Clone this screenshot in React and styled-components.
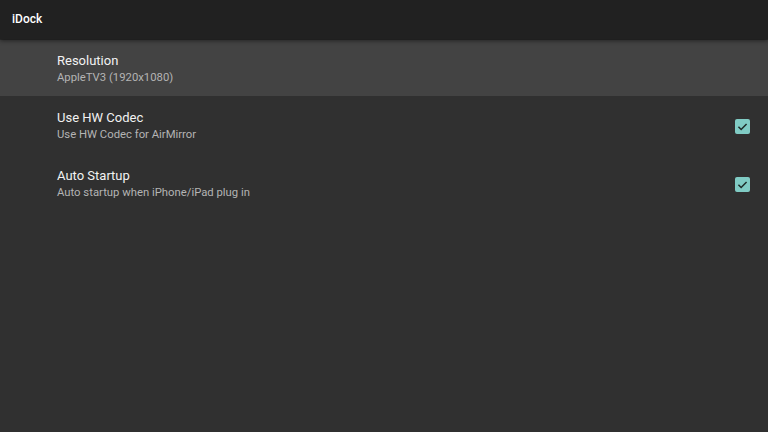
import styled, { createGlobalStyle } from "styled-components";

const Global = createGlobalStyle`
  html, body {
    margin: 0;
    background: #303030;
    font-family: Roboto, "Noto Sans", sans-serif;
  }
`;

const Page = styled.div`
  width: 768px;
  height: 432px;
  background: #303030;
  display: flex;
  flex-direction: column;
  overflow: hidden;
`;

const Toolbar = styled.header`
  height: 39px;
  background: #212121;
  display: flex;
  align-items: center;
  padding: 0 12px;
  box-shadow: 0 2px 4px rgba(0, 0, 0, 0.45);
  position: relative;
  z-index: 1;
`;

const AppTitle = styled.div`
  color: #ffffff;
  font-size: 12px;
  font-weight: 500;
  margin-top: -1px;
`;

const List = styled.div`
  display: flex;
  flex-direction: column;
  padding-top: 1px;
`;

const Row = styled.div`
  height: ${(p) => (p.$first ? 56 : 58)}px;
  background: ${(p) => (p.$focused ? "#434343" : "transparent")};
  display: flex;
  align-items: center;
  padding: 2px 18px 0 57px;
  box-sizing: border-box;
`;

const Texts = styled.div`
  flex: 1;
  display: flex;
  flex-direction: column;
  gap: 2px;
`;

const Title = styled.div`
  color: #f2f2f2;
  font-size: 13px;
  line-height: 16px;
`;

const Summary = styled.div`
  color: #b4b4b4;
  font-size: 11.3px;
  line-height: 14px;
`;

const Check = styled.div`
  width: 15px;
  height: 15px;
  border-radius: 2px;
  background: #80cbc4;
  display: flex;
  align-items: center;
  justify-content: center;
`;

function CheckBox() {
  return (
    <Check>
      <svg width="13" height="13" viewBox="0 0 24 24">
        <path d="M4.5 12.5l5 5 10-10" fill="none" stroke="#1e2a28" strokeWidth="2.8" />
      </svg>
    </Check>
  );
}

const prefs = [
  { title: "Resolution", summary: "AppleTV3 (1920x1080)", focused: true },
  { title: "Use HW Codec", summary: "Use HW Codec for AirMirror", checked: true },
  { title: "Auto Startup", summary: "Auto startup when iPhone/iPad plug in", checked: true },
];

export default function App() {
  return (
    <Page>
      <Global />
      <Toolbar>
        <AppTitle>iDock</AppTitle>
      </Toolbar>
      <List>
        {prefs.map((p, i) => (
          <Row key={p.title} $focused={p.focused} $first={i === 0}>
            <Texts>
              <Title>{p.title}</Title>
              <Summary>{p.summary}</Summary>
            </Texts>
            {p.checked && <CheckBox />}
          </Row>
        ))}
      </List>
    </Page>
  );
}
